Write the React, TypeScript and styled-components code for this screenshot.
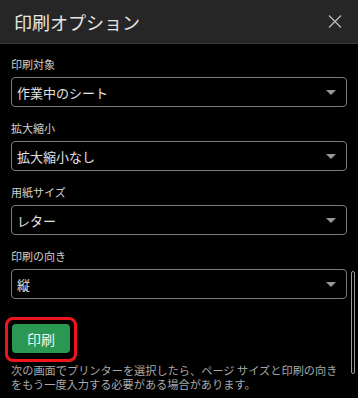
import React from "react";
import styled, { createGlobalStyle } from "styled-components";

const GlobalStyle = createGlobalStyle`
  html, body {
    margin: 0;
    padding: 0;
    background: #000;
  }
  body {
    font-family: "Noto Sans CJK JP", "Noto Sans", sans-serif;
    -webkit-font-smoothing: antialiased;
  }
`;

const Panel = styled.div`
  position: relative;
  width: 358px;
  height: 398px;
  overflow: hidden;
  background: #000;
  display: flex;
  flex-direction: column;
`;

const Header = styled.div`
  height: 43px;
  flex: 0 0 43px;
  display: flex;
  align-items: center;
  justify-content: space-between;
  padding: 0 16px 0 14px;
  background: #262626;
  border-bottom: 1px solid #3a3a3a;
`;

const Title = styled.h1`
  margin: 0;
  font-size: 18px;
  font-weight: 400;
  color: #e6e6e6;
  line-height: 24px;
`;

const CloseButton = styled.button`
  width: 14px;
  height: 14px;
  padding: 0;
  border: 0;
  background: none;
  display: flex;
  align-items: center;
  justify-content: center;
`;

const Body = styled.div`
  display: flex;
  flex-direction: column;
  gap: 13px;
  padding: 12px 11px 0 11px;
`;

const Field = styled.div`
  display: flex;
  flex-direction: column;
  gap: 5px;
`;

const Label = styled.label`
  font-size: 11px;
  line-height: 16px;
  color: #d2d2d2;
`;

const Select = styled.div`
  height: 30px;
  box-sizing: border-box;
  border: 1px solid #7a7a7a;
  border-radius: 4px;
  display: flex;
  align-items: center;
  justify-content: space-between;
  padding: 0 10px 0 5px;
`;

const SelectValue = styled.span`
  font-size: 13px;
  color: #e2e2e2;
`;

const Caret = styled.span`
  width: 0;
  height: 0;
  border-left: 5px solid transparent;
  border-right: 5px solid transparent;
  border-top: 5px solid #9a9a9a;
`;

const Actions = styled.div`
  display: flex;
  flex-direction: column;
  margin-top: 5px;
`;

const Highlight = styled.span`
  align-self: flex-start;
  margin-left: -6px;
  border: 3px solid #f0141c;
  border-radius: 8px;
  padding: 4px 4px 6px 4px;
`;

const PrintButton = styled.button`
  width: 58px;
  height: 29px;
  border: 0;
  border-radius: 4px;
  background: #2a9853;
  color: #eef7ef;
  font-family: inherit;
  font-size: 14px;
  display: block;
`;

const Help = styled.p`
  margin: 1px 0 0 0;
  font-size: 11.2px;
  line-height: 14px;
  color: #a9a9a9;
`;

const ScrollThumb = styled.div`
  position: absolute;
  right: 3px;
  top: 271px;
  width: 4px;
  height: 103px;
  box-sizing: border-box;
  border: 1px solid #9a9a9a;
  border-radius: 3px;
`;

const fields = [
  { label: "印刷対象", value: "作業中のシート" },
  { label: "拡大縮小", value: "拡大縮小なし" },
  { label: "用紙サイズ", value: "レター" },
  { label: "印刷の向き", value: "縦" },
];

export default function App() {
  return (
    <>
      <GlobalStyle />
      <Panel>
        <Header>
          <Title>印刷オプション</Title>
          <CloseButton aria-label="閉じる">
            <svg width="14" height="13" viewBox="0 0 14 13">
              <path d="M1 0.5 L13 12.5 M13 0.5 L1 12.5" stroke="#bdbdbd" strokeWidth="1.2" />
            </svg>
          </CloseButton>
        </Header>
        <Body>
          {fields.map((f) => (
            <Field key={f.label}>
              <Label>{f.label}</Label>
              <Select>
                <SelectValue>{f.value}</SelectValue>
                <Caret />
              </Select>
            </Field>
          ))}
          <Actions>
            <Highlight>
              <PrintButton>印刷</PrintButton>
            </Highlight>
            <Help>
              次の画面でプリンターを選択したら、ページ サイズと印刷の向きをもう一度入力する必要がある場合があります。
            </Help>
          </Actions>
        </Body>
        <ScrollThumb />
      </Panel>
    </>
  );
}
